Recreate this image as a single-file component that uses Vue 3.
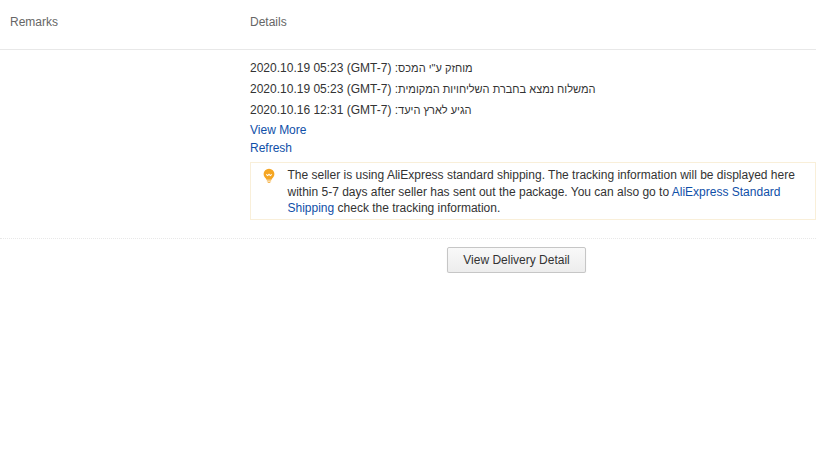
<script setup>
const events = [
  { time: '2020.10.19 05:23 (GMT-7) :', text: 'מוחזק ע"י המכס' },
  { time: '2020.10.19 05:23 (GMT-7) :', text: 'המשלוח נמצא בחברת השליחויות המקומית' },
  { time: '2020.10.16 12:31 (GMT-7) :', text: 'הגיע לארץ היעד' },
]
</script>

<template>
  <div class="page">
    <div class="head">
      <div class="col-a">Remarks</div>
      <div class="col-b">Details</div>
    </div>
    <div class="row">
      <div class="col-a"></div>
      <div class="col-b details">
        <p v-for="e in events" :key="e.text" class="event">{{ e.time }}<span class="he">{{ e.text }}</span></p>
        <a class="link first">View More</a>
        <a class="link">Refresh</a>
        <div class="notice">
          <svg class="bulb" width="12" height="16" viewBox="0 0 14 18">
            <path d="M7 0.5a6.3 6.3 0 0 1 6.3 6.3c0 2.6-1.6 4-2.6 5.2-.4.5-.6.9-.6 1.4H3.9c0-.5-.2-.9-.6-1.400C2.300 10.800.7 9.400.7 6.800A6.300 6.300 0 0 1 7 .5z" fill="#f5a623"/>
            <path d="M3.800 7l1.600 1.500L7 7l1.600 1.500L10.200 7" fill="none" stroke="#fff" stroke-width="1.200"/>
            <path d="M4.500 14.700h5M5.500 16.500h3" stroke="#f5b95a" stroke-width="1.200"/>
          </svg>
          <div class="notice-text">The seller is using AliExpress standard shipping. The tracking information will be displayed here within 5-7 days after seller has sent out the package. You can also go to <a class="inline">AliExpress Standard Shipping</a> check the tracking information.</div>
        </div>
      </div>
    </div>
    <div class="actions">
      <button class="btn">View Delivery Detail</button>
    </div>
  </div>
</template>

<style scoped>
.page {
  width: 816px;
  font-family: "Liberation Sans", Arial, sans-serif;
  font-size: 12px;
  color: #333;
}
.head {
  display: flex;
  height: 43px;
  padding-bottom: 6px;
  align-items: center;
  border-bottom: 1px solid #e8e8e8;
  color: #666;
}
.col-a {
  width: 240px;
  padding-left: 10px;
  flex: none;
}
.col-b {
  flex: 1;
  min-width: 0;
}
.row {
  display: flex;
  height: 180px;
  padding-top: 8px;
  border-bottom: 1px dotted #e8e8e8;
}
.event {
  margin: 0;
  height: 21px;
  line-height: 21px;
}
.he {
  font-size: 11px;
}
.link {
  display: block;
  color: #0f4fa8;
  height: 18px;
  line-height: 18px;
}
.notice {
  display: flex;
  margin-top: 5px;
  border: 1px solid #f9efd9;
  height: 52px;
  padding: 4px 12px 0 12px;
}
.bulb {
  flex: none;
  margin-right: 12px;
  margin-top: 1px;
}
.notice-text {
  line-height: 16.500px;
  flex: 1;
  margin-left: 0.5px;
}
.inline {
  color: #0f4fa8;
}
.actions {
  display: flex;
  justify-content: center;
  padding-top: 8px;
  padding-left: 217px;
}
.btn {
  width: 139px;
  height: 26px;
  padding: 0;
  font: inherit;
  color: #333;
  border: 1px solid #c6c6c6;
  border-radius: 2px;
  background: linear-gradient(#f9f9f9, #ededed);
  box-shadow: 0 1px 1px rgba(0, 0, 0, 0.12);
}
</style>
